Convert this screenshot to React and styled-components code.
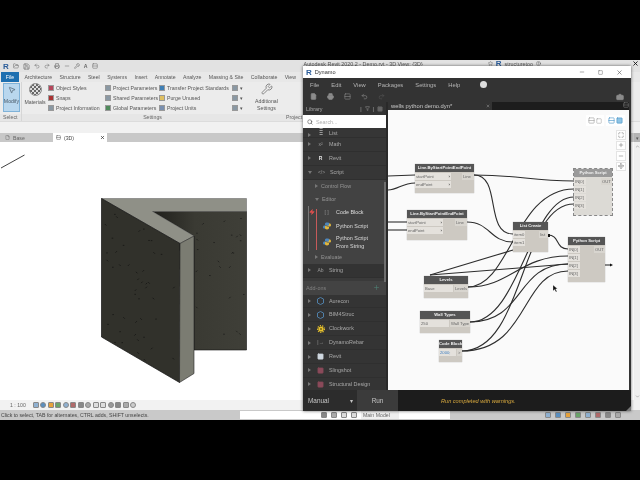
import React from "react";
import styled, { createGlobalStyle } from "styled-components";
import {
  MousePointer2, Save, FolderOpen, Undo2, Redo2, Camera, Search, Wrench, Plus, Minus,
  Maximize, Move, File, Printer, Rows2, Filter, X, Square, Zap, ChevronUp, ChevronDown, HelpCircle, Star,
} from "lucide-react";

const GlobalStyle = createGlobalStyle`
  html, body { margin: 0; padding: 0; background: #000; overflow: hidden; }
  body { font-family: "Liberation Sans", Arial, sans-serif; }
`;

const Screen = styled.div`
  position: relative;
  width: 640px;
  height: 480px;
  background: #000;
  padding: 60px 0;
  box-sizing: border-box;
  filter: blur(0.35px);
`;

const Revit = styled.div`
  width: 640px;
  height: 360px;
  display: flex;
  flex-direction: column;
  background: #f0f0f0;
  color: #555;
  font-size: 5.2px;
  overflow: hidden;
`;

const Qat = styled.div`
  height: 12px;
  flex: none;
  display: flex;
  align-items: center;
  gap: 4px;
  padding-left: 3px;
  background: #e2e2e2;
  color: #666;
`;

const Logo = styled.span`
  font-weight: 700;
  font-size: 8px;
  color: #2b5d9a;
`;

const TitleStrip = styled.div`
  margin-left: 202px;
  flex: 1;
  align-self: flex-start;
  height: 7px;
  display: flex;
  align-items: center;
  gap: 4px;
  font-size: 5.4px;
  color: #555;
  white-space: nowrap;
`;

const UserName = styled.span`
  margin-left: 61px;
  display: flex;
  align-items: center;
  gap: 3px;
`;

const AppClose = styled.span`
  margin-left: auto;
  margin-right: 1px;
  display: flex;
  color: #111;
`;

const TabRow = styled.div`
  height: 10px;
  flex: none;
  display: flex;
  align-items: stretch;
  gap: 7.4px;
  background: #e8e8e8;
  padding-left: 1px;
`;

const FileTab = styled.div`
  width: 18px;
  background: #1d6fb0;
  color: #fff;
  display: flex;
  align-items: center;
  justify-content: center;
  margin-right: -2px;
`;

const RibbonTab = styled.div`
  display: flex;
  align-items: center;
  white-space: nowrap;
`;

const Ribbon = styled.div`
  height: 39px;
  flex: none;
  display: flex;
  background: #ececec;
  border-bottom: 1px solid #dcdcdc;
`;

const RibbonGroup = styled.div`
  flex: none;
  width: ${(p) => p.$w}px;
  display: flex;
  flex-direction: column;
  border-right: ${(p) => (p.$line ? "1px solid #d6d6d6" : "none")};
  box-sizing: border-box;
`;

const GroupBody = styled.div`
  flex: 1;
  display: flex;
  min-height: 0;
`;

const GroupLabel = styled.div`
  height: 7px;
  flex: none;
  text-align: ${(p) => p.$align || "center"};
  line-height: 6px;
  color: #666;
  padding-left: ${(p) => p.$pad || 0}px;
  background: #e6e6e6;
`;

const ModifyButton = styled.div`
  width: 17px;
  height: 29px;
  margin: 1px 0 0 3px;
  background: #b9d7ee;
  border: 1px solid #7fb2d8;
  box-sizing: border-box;
  display: flex;
  flex-direction: column;
  align-items: center;
  gap: 4px;
  padding-top: 2px;
  color: #4a5a68;
`;

const BigTool = styled.div`
  width: ${(p) => p.$w}px;
  display: flex;
  flex-direction: column;
  align-items: center;
  gap: 3px;
  padding-top: 1px;
  text-align: center;
  line-height: 6.5px;
`;

const Sphere = styled.div`
  width: 13px;
  height: 13px;
  border-radius: 50%;
  background: repeating-conic-gradient(#666 0 25%, #ddd 0 50%) 0 0 / 4px 4px;
  border: 1px solid #888;
  box-sizing: border-box;
`;

const ToolColumn = styled.div`
  width: ${(p) => p.$w}px;
  display: flex;
  flex-direction: column;
  justify-content: space-around;
  padding: 1px 0;
`;

const SmallTool = styled.div`
  display: flex;
  align-items: center;
  gap: 2px;
  white-space: nowrap;
`;

const ToolIcon = styled.span`
  width: 6px;
  height: 6px;
  flex: none;
  background: ${(p) => p.$c || "#8a98a3"};
  border: 1px solid ${(p) => p.$b || "#999"};
  box-sizing: border-box;
`;

const Spacer = styled.div`
  height: 11px;
  flex: none;
  background: #f1f1f1;
`;

const ViewTabs = styled.div`
  height: 9px;
  flex: none;
  display: flex;
  background: #c8c8c8;
`;

const ViewTab = styled.div`
  width: ${(p) => p.$w}px;
  margin-left: ${(p) => p.$ml || 0}px;
  display: flex;
  align-items: center;
  gap: 3px;
  padding-left: 3px;
  box-sizing: border-box;
  background: ${(p) => (p.$active ? "#fff" : "transparent")};
  color: ${(p) => (p.$active ? "#444" : "#666")};
`;

const TabClose = styled.span`
  margin-left: auto;
  margin-right: 2px;
  display: flex;
  color: #222;
`;

const TabMenu = styled.span`
  margin-left: auto;
  width: 6px;
  background: #b4b4b4;
  display: flex;
  align-items: center;
  justify-content: center;
`;

const ModelCanvas = styled.div`
  flex: 1;
  min-height: 0;
  display: flex;
  background: #fff;
`;

const ModelSvg = styled.svg`
  display: block;
  width: 634px;
  height: 259px;
  flex: none;
`;

const ScrollGutter = styled.div`
  flex: 1;
  display: flex;
  flex-direction: column;
  justify-content: space-between;
  align-items: center;
  background: #efefef;
  color: #666;
  padding: 2px 0 1px;
`;

const ViewBar = styled.div`
  height: 10px;
  flex: none;
  display: flex;
  align-items: center;
  gap: 1.5px;
  padding-left: 10px;
  background: #f2f2f2;
  color: #666;
`;

const Scale = styled.span`
  width: 21px;
  flex: none;
`;

const ViewGlyph = styled.span`
  width: 6px;
  height: 6px;
  flex: none;
  border-radius: ${(p) => (p.$round ? "50%" : "1px")};
  background: ${(p) => p.$c};
  border: 1px solid #888;
  box-sizing: border-box;
`;

const StatusBar = styled.div`
  height: 10px;
  flex: none;
  display: flex;
  align-items: center;
  background: #c9c9c9;
  color: #444;
  padding-left: 1px;
`;

const StatusText = styled.span`
  width: 239px;
  flex: none;
  white-space: nowrap;
`;

const StatusField = styled.div`
  width: 210px;
  height: 8px;
  background: #fff;
  flex: none;
  display: flex;
  align-items: center;
  justify-content: flex-end;
  gap: 4px;
  padding-right: 51px;
  box-sizing: border-box;
`;

const StatusModel = styled.span`
  width: 36px;
  background: #efefef;
  color: #666;
  padding-left: 2px;
  line-height: 8px;
`;

const TrayIcons = styled.div`
  margin-left: 95px;
  display: flex;
  align-items: center;
  gap: 4px;
`;

/* Dynamo floating window */
const DynamoWindow = styled.div`
  position: absolute;
  left: 303px;
  top: 66px;
  width: 328px;
  height: 345px;
  display: flex;
  flex-direction: column;
  background: #333;
  box-shadow: 0 0 3px rgba(0, 0, 0, 0.6);
  overflow: hidden;
`;

const TitleBar = styled.div`
  height: 12px;
  flex: none;
  background: #fff;
  color: #333;
  display: flex;
  align-items: center;
  gap: 3px;
  padding-left: 3px;
  font-size: 5.6px;
`;

const WinButtons = styled.div`
  margin-left: auto;
  display: flex;
  align-items: center;
  gap: 13px;
  padding-right: 8px;
  color: #555;
`;

const MenuBar = styled.div`
  height: 13px;
  flex: none;
  display: flex;
  align-items: center;
  padding-left: 7px;
  gap: 12px;
  font-size: 5.8px;
  color: #b4b4b4;
`;

const HelpDot = styled.span`
  width: 7px;
  height: 7px;
  border-radius: 50%;
  background: #ddd;
  margin-left: 8px;
`;

const ToolBar = styled.div`
  height: 11px;
  flex: none;
  display: flex;
  align-items: center;
  padding: 0 7px;
  gap: 10px;
  color: #8c8c8c;
`;

const CameraSlot = styled.span`
  margin-left: auto;
  display: flex;
`;

const Workspace = styled.div`
  height: 288px;
  flex: none;
  overflow: hidden;
  display: flex;
  padding-right: 2px;
`;

const LibraryPane = styled.div`
  width: 83px;
  flex: none;
  display: flex;
  flex-direction: column;
  background: #3a3a3a;
  color: #a8a8a8;
  font-size: 5.4px;
  position: relative;
`;

const LibraryHead = styled.div`
  height: 13px;
  flex: none;
  display: flex;
  align-items: center;
  padding: 0 3px;
  gap: 3px;
  background: #333;
`;

const HeadGap = styled.span`
  margin-left: auto;
`;

const SearchBox = styled.div`
  height: 13px;
  flex: none;
  display: flex;
  align-items: center;
  gap: 3px;
  padding-left: 4px;
  background: #fff;
  color: #b0b0b0;
`;

const LibRow = styled.div`
  height: ${(p) => p.$h || 13.9}px;
  flex: none;
  box-sizing: border-box;
  display: flex;
  align-items: ${(p) => p.$align || "center"};
  padding-left: ${(p) => p.$pad || 5}px;
  gap: 4px;
  line-height: 7px;
  background: ${(p) => p.$bg || "#363636"};
  border-bottom: 1px solid #2f2f2f;
  color: ${(p) => p.$c || "#a8a8a8"};
  overflow: hidden;
`;

const Arrow = styled.span`
  width: 0;
  height: 0;
  flex: none;
  border-left: 3px solid #777;
  border-top: 2px solid transparent;
  border-bottom: 2px solid transparent;
  margin-right: ${(p) => p.$mr || 1}px;
`;

const DownArrow = styled.span`
  width: 0;
  height: 0;
  flex: none;
  border-top: 3px solid #777;
  border-left: 2px solid transparent;
  border-right: 2px solid transparent;
  margin-right: ${(p) => p.$mr || 1}px;
`;

const LibIcon = styled.span`
  width: 9px;
  flex: none;
  display: flex;
  justify-content: center;
  align-items: center;
  font-size: 5px;
  font-weight: ${(p) => (p.$bold ? 700 : 400)};
  color: ${(p) => p.$c || "#999"};
`;

const SubPanel = styled.div`
  flex: none;
  background: #424242;
  display: flex;
  flex-direction: column;
`;

const SubRow = styled.div`
  height: 13px;
  flex: none;
  display: flex;
  align-items: center;
  padding-left: ${(p) => p.$pad}px;
  color: #959595;
`;

const EditorGroup = styled.div`
  margin-left: 5px;
  padding-left: 8px;
  border-left: 1px solid #777;
  position: relative;
  display: flex;
  flex-direction: column;
`;

const RedLine = styled.span`
  position: absolute;
  left: 7px;
  top: 3px;
  bottom: 1px;
  width: 1px;
  background: #c65a5a;
`;

const Bolt = styled.span`
  position: absolute;
  left: 0;
  top: 3px;
  display: flex;
  color: #e2504f;
`;

const LeafRow = styled.div`
  min-height: 13.5px;
  display: flex;
  align-items: center;
  gap: 5px;
  padding: ${(p) => (p.$pad ? "1px 0" : "0")};
  line-height: 8px;
  color: #dcdcdc;
  margin-left: 5px;
`;

const AddonHead = styled.div`
  height: 14px;
  flex: none;
  margin-top: 3px;
  padding: 0 6px 0 3px;
  display: flex;
  justify-content: space-between;
  align-items: center;
  background: #434343;
  color: #808080;
`;

const Scrollbar = styled.span`
  position: absolute;
  right: 0;
  top: 80px;
  width: 2px;
  height: 100px;
  background: #6e6e6e;
`;

const Splitter = styled.div`
  width: 2px;
  flex: none;
  background: #2a2a2a;
`;

const GraphPane = styled.div`
  flex: 1;
  min-width: 0;
  display: flex;
  flex-direction: column;
`;

const DocTabs = styled.div`
  height: 8px;
  flex: none;
  display: flex;
  justify-content: space-between;
  background: #1d1d1d;
  color: #888;
`;

const DocTab = styled.div`
  width: 104px;
  background: #333;
  color: #c8c8c8;
  font-size: 5.8px;
  display: flex;
  align-items: center;
  justify-content: space-between;
  padding: 0 2px 0 3px;
  box-sizing: border-box;
  white-space: nowrap;
`;

const GraphCanvas = styled.div`
  position: relative;
  height: 280px;
  flex: none;
  background: #fafafa;
  overflow: hidden;
`;

const WireSvg = styled.svg`
  position: absolute;
  left: 0;
  top: 0;
  width: 242px;
  height: 280px;
`;

const NodeBox = styled.div`
  position: absolute;
  left: ${(p) => p.$x - 388}px;
  top: ${(p) => p.$y - 110}px;
  width: ${(p) => p.$w}px;
  height: ${(p) => p.$h}px;
  display: flex;
  flex-direction: column;
  background: ${(p) => (p.$ghost ? "#dcdad5" : "#cdc9c2")};
  outline: ${(p) => (p.$ghost ? "1px dashed #888" : "none")};
  box-shadow: 0 0 1px rgba(0, 0, 0, 0.35);
  font-size: 4.2px;
  color: #666;
`;

const NodeHead = styled.div`
  height: 8px;
  flex: none;
  background: ${(p) => (p.$ghost ? "#9a9a9a" : "#555")};
  color: #f0f0f0;
  font-weight: 700;
  text-align: center;
  line-height: 8px;
  white-space: nowrap;
  overflow: hidden;
`;

const NodePorts = styled.div`
  display: flex;
  justify-content: space-between;
`;

const PortCol = styled.div`
  display: flex;
  flex-direction: column;
  gap: 1px;
  padding-top: 1px;
`;

const Port = styled.div`
  height: 7px;
  width: ${(p) => p.$w}px;
  padding: 0 1px;
  box-sizing: border-box;
  display: flex;
  align-items: center;
  justify-content: space-between;
  line-height: 6px;
  background: ${(p) => (p.$dark ? "#d8d5cf" : "#e4e1dc")};
  color: ${(p) => p.$c || "#666"};
  white-space: nowrap;
  overflow: hidden;
`;

const Chevron = styled.span`
  color: #333;
  font-weight: 700;
`;

const CanvasTools = styled.div`
  position: absolute;
  right: 4px;
  top: 5px;
  display: flex;
  gap: 2px;
`;

const ToolChip = styled.div`
  height: 11px;
  padding: 0 2px;
  background: #fff;
  display: flex;
  align-items: center;
  gap: 1px;
  color: ${(p) => p.$c};
`;

const ZoomTools = styled.div`
  position: absolute;
  right: 3px;
  top: 20px;
  width: 10px;
  display: flex;
  flex-direction: column;
  gap: 1px;
`;

const ZoomButton = styled.div`
  height: 9.5px;
  background: #fff;
  border: 1px solid #e4e4e4;
  box-sizing: border-box;
  display: flex;
  align-items: center;
  justify-content: center;
  color: #666;
`;

const RunBar = styled.div`
  flex: 1;
  min-height: 0;
  position: relative;
  display: flex;
  align-items: stretch;
  background: #1c1c1c;
  font-size: 6.4px;
  color: #c4c4c4;
`;

const RunMode = styled.div`
  width: 54px;
  flex: none;
  background: #2c2c2c;
  display: flex;
  align-items: center;
  justify-content: space-between;
  padding: 0 4px 0 5px;
  box-sizing: border-box;
`;

const RunButton = styled.div`
  width: 41px;
  flex: none;
  background: #3b3b3b;
  display: flex;
  align-items: center;
  justify-content: center;
`;

const RunStatus = styled.div`
  margin-left: 43px;
  display: flex;
  align-items: center;
  font-style: italic;
  font-size: 5.6px;
  color: #d8a93e;
`;

const ResizeGrip = styled.span`
  position: absolute;
  right: 0;
  bottom: 0;
  width: 0;
  height: 0;
  border-left: 5px solid transparent;
  border-bottom: 5px solid #777;
`;

const WIRES = [
  "M474 175 C 520 175, 530 181, 574 181",
  "M474 175 C 502 175, 484 234, 513 234",
  "M467 222 C 490 222, 490 242, 513 242",
  "M548 235 C 560 235, 555 249, 568 249",
  "M388 176 L 415 175",
  "M388 190 C 398 190, 402 183, 415 183",
  "M388 222 L 407 222",
  "M388 230 L 407 230",
  "M468 287 C 510 287, 515 189, 574 189",
  "M470 322 C 520 322, 530 197, 574 197",
  "M462 351 C 525 351, 520 204, 574 204",
  "M468 287 C 510 287, 520 256, 568 256",
  "M470 322 C 525 322, 515 264, 568 264",
  "M462 351 C 530 351, 520 271, 568 271",
  "M430 275 L 568 264",
  "M430 275 L 513 250",
  "M605 265 L 611 265",
];

// speckles on the concrete faces, seeded so every run looks the same
const speckles = (count, x0, x1, y0, y1, seed) => {
  let s = seed;
  const next = () => {
    s = (s * 9301 + 49297) % 233280;
    return s / 233280;
  };
  return Array.from({ length: count }, () => {
    const x = x0 + next() * (x1 - x0);
    const y = y0 + next() * (y1 - y0);
    return { x, y, a: next() > 0.5 ? 1.5 : -1.5, b: next() > 0.4 ? 1.5 : 0 };
  });
};

const leftDots = speckles(45, 103, 178, 0, 135, 7).map((d) => ({
  ...d,
  y: 200 + (d.x - 101) * 0.57 + d.y,
}));
const backDots = speckles(24, 196, 246, 214, 345, 21);

const WallDrawing = () => (
  <ModelSvg viewBox="0 141 634 259">
    <defs>
      <linearGradient id="backFace" x1="0" x2="1" y1="0" y2="0">
        <stop offset="0" stopColor="#1f1f1b" />
        <stop offset="0.45" stopColor="#3a3a33" />
        <stop offset="1" stopColor="#3f3f38" />
      </linearGradient>
    </defs>
    <line x1="1" y1="167" x2="24.5" y2="154" stroke="#111" strokeWidth="0.8" />
    <polygon points="152.5,210.5 246.5,210.5 246.5,349 194,349 194,235" fill="url(#backFace)" stroke="#111" strokeWidth="0.6" />
    {backDots.map((d, i) => (
      <line key={i} x1={d.x} y1={d.y} x2={d.x + d.a} y2={d.y + d.b} stroke="#111" strokeWidth="0.6" />
    ))}
    <polygon points="101.5,197.5 246.5,197.5 246.5,210.5 152.5,210.5 194,235 180,242.5" fill="#8f9087" stroke="#444" strokeWidth="0.4" />
    <polygon points="101.5,197.5 180,242.5 179.5,381.5 101.5,336" fill="#31312b" stroke="#111" strokeWidth="0.7" />
    {leftDots.map((d, i) => (
      <line key={i} x1={d.x} y1={d.y} x2={d.x + d.a} y2={d.y + d.b} stroke="#0c0c0c" strokeWidth="0.6" />
    ))}
    <polygon points="180,242.5 194,235 194,372.5 179.5,381.5" fill="#7b7c72" stroke="#222" strokeWidth="0.6" />
  </ModelSvg>
);

const PythonMark = () => (
  <svg width="8" height="8" viewBox="0 0 8 8">
    <path d="M4 0.5c-1.5 0-2 .6-2 1.4V3h2.4v.4H1.4C.6 3.4 0 4 0 5s.6 1.6 1.4 1.6H2.4V5.6c0-.8.6-1.4 1.4-1.4h1.6c.6 0 1-.4 1-1V1.9C6.4 1 5.5.5 4 .5z" fill="#4d86bd" />
    <path d="M4 7.5c1.5 0 2-.6 2-1.4V5H3.6v-.4h3c.8 0 1.4-.6 1.4-1.6S7.4 1.4 6.6 1.4H6v1c0 .8-.6 1.4-1.4 1.4H3c-.6 0-1 .4-1 1v1.3C2 7 2.5 7.5 4 7.5z" fill="#e0b63c" />
  </svg>
);

const PackageMark = ({ c }) => (
  <svg width="7" height="8" viewBox="0 0 7 8">
    <path d="M3.5 0.5 6.5 2v4L3.5 7.5.5 6V2z" fill="none" stroke={c} strokeWidth="1" />
  </svg>
);

const GearMark = () => (
  <svg width="8" height="8" viewBox="0 0 8 8">
    <circle cx="4" cy="4" r="2.6" fill="#e8c22c" />
    <circle cx="4" cy="4" r="3.4" fill="none" stroke="#e8c22c" strokeWidth="1.2" strokeDasharray="1.2 1.2" />
    <circle cx="4" cy="4" r="0.9" fill="#6b5a10" />
  </svg>
);

// cursor and the two black output ports drawn on top of the nodes
const CanvasMarks = () => (
  <WireSvg viewBox="388 110 242 280">
    <rect x="548" y="234" width="2" height="3" fill="#111" />
    <polygon points="610,263.5 613,265 610,266.5" fill="#111" />
    <path d="M553 285 L553 291 L554.5 289.6 L556 292 L557 291.4 L555.6 289 L557.4 288.8 Z" fill="#111" stroke="#fff" strokeWidth="0.3" />
  </WireSvg>
);

const Node = ({ x, y, w, h, title, ghost, inputs, outputs, inW, outW }) => (
  <NodeBox $x={x} $y={y} $w={w} $h={h} $ghost={ghost}>
    <NodeHead $ghost={ghost}>{title}</NodeHead>
    <NodePorts>
      <PortCol>
        {inputs.map((p, i) => (
          <Port key={i} $w={inW} $c={p.c}>
            {p.t}
            {p.arrow && <Chevron>›</Chevron>}
          </Port>
        ))}
      </PortCol>
      <PortCol>
        {outputs.map((p, i) => (
          <Port key={i} $w={outW} $dark>{p}</Port>
        ))}
      </PortCol>
    </NodePorts>
  </NodeBox>
);

const Small = ({ c, b, children }) => (
  <SmallTool>
    <ToolIcon $c={c} $b={b} />
    {children}
  </SmallTool>
);

const RIBBON_TABS = ["Architecture", "Structure", "Steel", "Systems", "Insert", "Annotate", "Analyze", "Massing & Site", "Collaborate", "View"];
const MENU = ["File", "Edit", "View", "Packages", "Settings", "Help"];
const GLYPHS = ["#8fb0d0", "#5a8fc0", "#e6a23c", "#6aa36a", "#8fb0d0", "#b06a6a", "#888", "#aaa", "#ddd", "#ddd", "#999", "#888", "#aaa", "#ccc"];

const ADDONS = [
  { name: "Aurecon", icon: <PackageMark c="#4f7fa8" /> },
  { name: "BIM4Struc", icon: <PackageMark c="#4f7fa8" /> },
  { name: "Clockwork", icon: <GearMark /> },
  { name: "DynamoRebar", icon: <span>|→</span> },
  { name: "Revit", icon: <Square size={7} color="#cfd8e0" fill="#cfd8e0" /> },
  { name: "Slingshot", icon: <Square size={7} color="#8a4a5a" fill="#8a4a5a" /> },
  { name: "Structural Design", icon: <Square size={7} color="#8a4a5a" fill="#8a4a5a" /> },
];

const Library = () => (
  <LibraryPane>
    <LibraryHead>
      Library
      <HeadGap>|</HeadGap>
      <Filter size={5} />
      <span>|</span>
      <Square size={6} fill="#666" color="#666" />
    </LibraryHead>
    <SearchBox>
      <Search size={6} color="#333" />
      Search...
    </SearchBox>
    <LibRow $h={10} $align="flex-end"><Arrow /><LibIcon>≣</LibIcon>List</LibRow>
    <LibRow><Arrow /><LibIcon>x²</LibIcon>Math</LibRow>
    <LibRow><Arrow /><LibIcon $c="#e4e4e4" $bold>R</LibIcon>Revit</LibRow>
    <LibRow><DownArrow /><LibIcon>&lt;/&gt;</LibIcon>Script</LibRow>
    <SubPanel>
      <SubRow $pad={12}><Arrow $mr={3} />Control Flow</SubRow>
      <SubRow $pad={12}><DownArrow $mr={3} />Editor</SubRow>
      <EditorGroup>
        <RedLine />
        <Bolt><Zap size={6} fill="#e2504f" /></Bolt>
        <LeafRow><LibIcon>[ ]</LibIcon>Code Block</LeafRow>
        <LeafRow><LibIcon><PythonMark /></LibIcon>Python Script</LeafRow>
        <LeafRow $pad><LibIcon><PythonMark /></LibIcon><span>Python Script<br />From String</span></LeafRow>
      </EditorGroup>
      <SubRow $pad={12}><Arrow $mr={3} />Evaluate</SubRow>
    </SubPanel>
    <LibRow $bg="#333"><Arrow /><LibIcon>Ab</LibIcon>String</LibRow>
    <AddonHead>Add-ons<Plus size={7} color="#4d7f73" /></AddonHead>
    {ADDONS.map((a) => (
      <LibRow key={a.name} $bg="#343434"><Arrow /><LibIcon>{a.icon}</LibIcon>{a.name}</LibRow>
    ))}
    <Scrollbar />
  </LibraryPane>
);

const App = () => (
  <Screen>
    <GlobalStyle />
    <Revit>
      <Qat>
        <Logo>R</Logo>
        <FolderOpen size={6} />
        <Save size={7} />
        <Undo2 size={6} />
        <Redo2 size={6} />
        <Printer size={6} />
        <Minus size={6} />
        <Wrench size={6} />
        <b>A</b>
        <Rows2 size={6} />
        <TitleStrip>
          Autodesk Revit 2020.2 - Demo.rvt - 3D View: {"{3D}"}
          <UserName>
            <Star size={5} />
            <Logo as="b">R</Logo>
            structuretoo
            <HelpCircle size={5} />
          </UserName>
          <AppClose><X size={7} strokeWidth={3} /></AppClose>
        </TitleStrip>
      </Qat>
      <TabRow>
        <FileTab>File</FileTab>
        {RIBBON_TABS.map((t) => <RibbonTab key={t}>{t}</RibbonTab>)}
      </TabRow>
      <Ribbon>
        <RibbonGroup $w={22} $line>
          <GroupBody>
            <ModifyButton>
              <MousePointer2 size={8} />
              Modify
            </ModifyButton>
          </GroupBody>
          <GroupLabel $align="left" $pad={3}>Select ▾</GroupLabel>
        </RibbonGroup>
        <RibbonGroup $w={261}>
          <GroupBody>
            <BigTool $w={26}>
              <Sphere />
              Materials
            </BigTool>
            <ToolColumn $w={57}>
              <Small c="#b5475c">Object Styles</Small>
              <Small c="#a33">Snaps</Small>
              <Small>Project Information</Small>
            </ToolColumn>
            <ToolColumn $w={54}>
              <Small>Project Parameters</Small>
              <Small>Shared Parameters</Small>
              <Small c="#4f8a5b">Global Parameters</Small>
            </ToolColumn>
            <ToolColumn $w={73}>
              <Small c="#3f7fb5">Transfer Project Standards</Small>
              <Small c="#e0c060">Purge Unused</Small>
              <Small c="#7a90b0">Project Units</Small>
            </ToolColumn>
            <ToolColumn $w={20}>
              <Small>▾</Small>
              <Small>▾</Small>
              <Small>▾</Small>
            </ToolColumn>
            <BigTool $w={29}>
              <Wrench size={12} color="#888" />
              Additional<br />Settings
            </BigTool>
          </GroupBody>
          <GroupLabel>Settings</GroupLabel>
        </RibbonGroup>
        <RibbonGroup $w={30}>
          <GroupBody />
          <GroupLabel $align="left" $pad={3}>Project</GroupLabel>
        </RibbonGroup>
      </Ribbon>
      <Spacer />
      <ViewTabs>
        <ViewTab $w={50} $ml={2}><File size={5} />Base</ViewTab>
        <ViewTab $w={54} $ml={1} $active>
          <Rows2 size={5} />(3D)
          <TabClose><X size={5} strokeWidth={3} /></TabClose>
        </ViewTab>
        <TabMenu>▾</TabMenu>
      </ViewTabs>
      <ModelCanvas>
        <WallDrawing />
        <ScrollGutter>
          <ChevronUp size={5} />
          <ChevronDown size={5} />
        </ScrollGutter>
      </ModelCanvas>
      <ViewBar>
        <Scale>1 : 100</Scale>
        {GLYPHS.map((c, i) => <ViewGlyph key={i} $c={c} $round={i % 3 === 1} />)}
      </ViewBar>
      <StatusBar>
        <StatusText>Click to select, TAB for alternates, CTRL adds, SHIFT unselects.</StatusText>
        <StatusField>
          {GLYPHS.slice(6, 10).map((c, i) => <ViewGlyph key={i} $c={c} />)}
          <StatusModel>Main Model</StatusModel>
        </StatusField>
        <TrayIcons>
          {GLYPHS.slice(0, 8).map((c, i) => <ViewGlyph key={i} $c={c} />)}
        </TrayIcons>
      </StatusBar>
    </Revit>

    <DynamoWindow>
      <TitleBar>
        <Logo>R</Logo>
        Dynamo
        <WinButtons>
          <Minus size={6} />
          <Square size={5} />
          <X size={7} />
        </WinButtons>
      </TitleBar>
      <MenuBar>
        {MENU.map((m) => <span key={m}>{m}</span>)}
        <HelpDot />
      </MenuBar>
      <ToolBar>
        <File size={7} fill="#8c8c8c" />
        <Printer size={7} fill="#8c8c8c" />
        <Rows2 size={7} />
        <Undo2 size={7} />
        <Redo2 size={7} color="#555" />
        <CameraSlot><Camera size={8} fill="#8c8c8c" /></CameraSlot>
      </ToolBar>
      <Workspace>
        <Library />
        <Splitter />
        <GraphPane>
          <DocTabs>
            <DocTab>wells python demo.dyn*<X size={4} /></DocTab>
            <Rows2 size={6} />
          </DocTabs>
          <GraphCanvas>
            <WireSvg viewBox="388 110 242 280">
              {WIRES.map((d) => (
                <path key={d} d={d} fill="none" stroke="#2d2d2d" strokeWidth="1.1" />
              ))}
            </WireSvg>
            <Node x={415} y={164} w={59} h={29} title="Line.ByStartPointEndPoint"
              inputs={[{ t: "startPoint", arrow: true }, { t: "endPoint", arrow: true }]} outputs={["Line"]} inW={36} outW={12} />
            <Node x={407} y={210} w={60} h={30} title="Line.ByStartPointEndPoint"
              inputs={[{ t: "startPoint", arrow: true }, { t: "endPoint", arrow: true }]} outputs={["Line"]} inW={36} outW={12} />
            <Node x={513} y={222} w={35} h={30} title="List Create"
              inputs={[{ t: "item0" }, { t: "item1" }]} outputs={["list"]} inW={12} outW={9} />
            <Node x={574} y={169} w={38} h={46} ghost title="Python Script"
              inputs={[{ t: "IN[0]" }, { t: "IN[1]" }, { t: "IN[2]" }, { t: "IN[3]" }]} outputs={["OUT"]} inW={12} outW={11} />
            <Node x={568} y={237} w={37} h={45} title="Python Script"
              inputs={[{ t: "IN[0]" }, { t: "IN[1]" }, { t: "IN[2]" }, { t: "IN[3]" }]} outputs={["OUT"]} inW={12} outW={11} />
            <Node x={424} y={276} w={44} h={22} title="Levels"
              inputs={[{ t: "Base" }]} outputs={["Levels"]} inW={29} outW={14} />
            <Node x={420} y={311} w={50} h={22} title="Wall Types"
              inputs={[{ t: "250" }]} outputs={["Wall Type"]} inW={29} outW={20} />
            <Node x={439} y={340} w={23} h={22} title="Code Block"
              inputs={[{ t: "2000;", c: "#3f7fc0" }]} outputs={[">"]} inW={17} outW={5} />
            <CanvasMarks />
            <CanvasTools>
              <ToolChip $c="#999"><Rows2 size={7} /><Square size={6} /></ToolChip>
              <ToolChip $c="#3f8fc4"><Rows2 size={7} /><Square size={7} fill="#8fc4e4" /></ToolChip>
            </CanvasTools>
            <ZoomTools>
              <ZoomButton><Maximize size={6} /></ZoomButton>
              <ZoomButton><Plus size={6} /></ZoomButton>
              <ZoomButton><Minus size={6} /></ZoomButton>
              <ZoomButton><Move size={6} /></ZoomButton>
            </ZoomTools>
          </GraphCanvas>
        </GraphPane>
      </Workspace>
      <RunBar>
        <RunMode>Manual<span>▾</span></RunMode>
        <RunButton>Run</RunButton>
        <RunStatus>Run completed with warnings.</RunStatus>
        <ResizeGrip />
      </RunBar>
    </DynamoWindow>
  </Screen>
);

export default App;
